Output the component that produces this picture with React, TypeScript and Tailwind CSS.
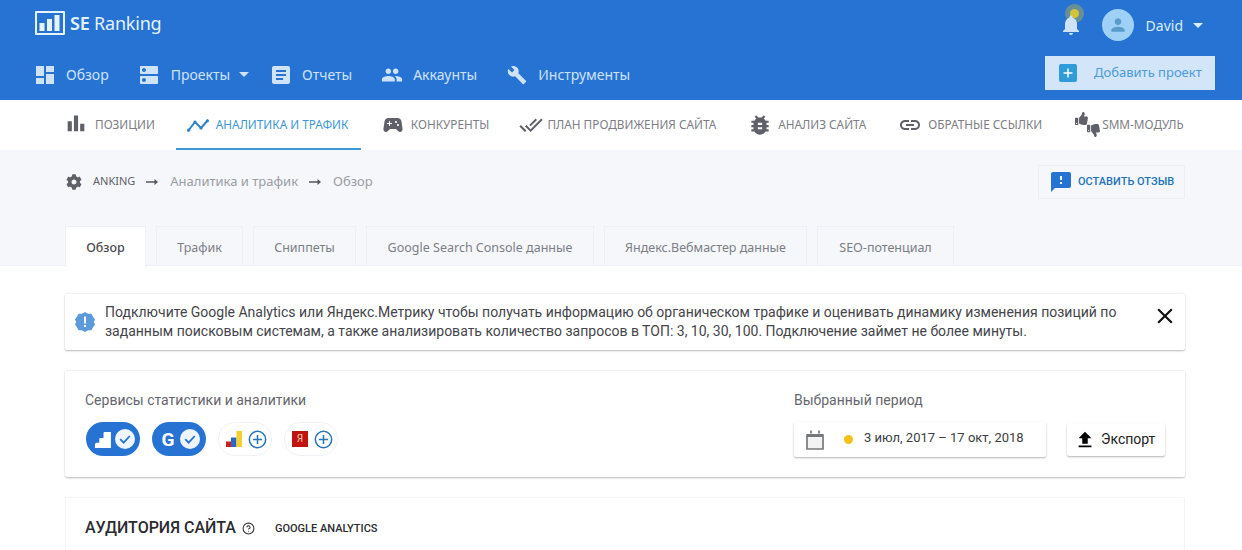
import { CircleHelp } from 'lucide-react';
import { FaCog, FaThumbsDown, FaThumbsUp } from 'react-icons/fa';

const P = {
  dashboard: 'M3 13h8V3H3v10zm0 8h8v-6H3v6zm10 0h8V11h-8v10zm0-18v6h8V3h-8z',
  dns: 'M20 13H4c-.55 0-1 .45-1 1v6c0 .55.45 1 1 1h16c.55 0 1-.45 1-1v-6c0-.55-.45-1-1-1zM7 19c-1.1 0-2-.9-2-2s.9-2 2-2 2 .9 2 2-.9 2-2 2zM20 3H4c-.55 0-1 .45-1 1v6c0 .55.45 1 1 1h16c.55 0 1-.45 1-1V4c0-.55-.45-1-1-1zM7 9c-1.1 0-2-.9-2-2s.9-2 2-2 2 .9 2 2-.9 2-2 2z',
  article: 'M19 3H5c-1.1 0-2 .9-2 2v14c0 1.1.9 2 2 2h14c1.1 0 2-.9 2-2V5c0-1.1-.9-2-2-2zm-5 14H7v-2h7v2zm3-4H7v-2h10v2zm0-4H7V7h10v2z',
  people: 'M16 11c1.66 0 2.99-1.34 2.99-3S17.66 5 16 5c-1.66 0-3 1.34-3 3s1.34 3 3 3zm-8 0c1.66 0 2.99-1.34 2.99-3S9.66 5 8 5C6.34 5 5 6.34 5 8s1.34 3 3 3zm0 2c-2.33 0-7 1.17-7 3.5V19h14v-2.5c0-2.33-4.67-3.5-7-3.5zm8 0c-.29 0-.62.02-.97.05 1.16.84 1.97 1.97 1.97 3.45V19h6v-2.5c0-2.33-4.67-3.5-7-3.5z',
  build: 'M22.7 19l-9.1-9.1c.9-2.3.4-5-1.5-6.9-2-2-5-2.4-7.4-1.3L9 6 6 9 1.6 4.7C.4 7.1.9 10.1 2.9 12.1c1.9 1.9 4.6 2.4 6.9 1.5l9.1 9.1c.4.4 1 .4 1.4 0l2.3-2.3c.5-.4.5-1.1.1-1.4z',
  bars: 'M2 10h5v12H2zM9.500 3h5v19h-5zM17 13h5v9h-5z',
  gamepad: 'M21.58 16.09l-1.09-7.66C20.21 6.46 18.52 5 16.53 5H7.470C5.480 5 3.790 6.460 3.510 8.430l-1.090 7.660C2.200 17.630 3.390 19 4.940 19c.68 0 1.320-.27 1.800-.75L9 16h6l2.250 2.250c.48.48 1.130.75 1.800.75 1.560 0 2.750-1.370 2.530-2.910zM11 11H9v2H8v-2H6v-1h2V8h1v2h2v1zm4-1c-.55 0-1-.45-1-1s.45-1 1-1 1 .45 1 1-.45 1-1 1zm2 3c-.55 0-1-.45-1-1s.45-1 1-1 1 .45 1 1-.45 1-1 1z',
  doneAll: 'M18 7l-1.41-1.41-6.34 6.34 1.41 1.41L18 7zm4.24-1.41L11.66 16.17 7.48 12l-1.41 1.41L11.66 19l12-12-1.42-1.41zM.41 13.41L6 19l1.41-1.41L1.83 12 .41 13.41z',
  bug: 'M20 8h-2.81c-.45-.78-1.07-1.45-1.82-1.96L17 4.41 15.59 3l-2.17 2.17C12.96 5.06 12.49 5 12 5c-.49 0-.96.06-1.41.17L8.41 3 7 4.41l1.62 1.63C7.88 6.55 7.26 7.22 6.81 8H4v2h2.09c-.05.33-.09.66-.09 1v1H4v2h2v1c0 .34.04.67.09 1H4v2h2.81c1.04 1.79 2.97 3 5.19 3s4.15-1.21 5.19-3H20v-2h-2.09c.05-.33.09-.66.09-1v-1h2v-2h-2v-1c0-.34-.04-.67-.09-1H20V8zm-6 8h-4v-2h4v2zm0-4h-4v-2h4v2z',
  link: 'M3.9 12c0-1.71 1.39-3.1 3.1-3.1h4V7H7c-2.76 0-5 2.24-5 5s2.24 5 5 5h4v-1.9H7c-1.71 0-3.1-1.39-3.1-3.1zM8 13h8v-2H8v2zm9-6h-4v1.9h4c1.71 0 3.1 1.39 3.1 3.1s-1.39 3.1-3.1 3.1h-4V17h4c2.76 0 5-2.24 5-5s-2.24-5-5-5z',
  feedback: 'M20 2H4c-1.1 0-1.99.9-1.99 2L2 22l4-4h14c1.1 0 2-.9 2-2V4c0-1.1-.9-2-2-2zm-7 12h-2v-2h2v2zm0-4h-2V6h2v4z',
  bell: 'M12 22c1.1 0 2-.9 2-2h-4c0 1.1.89 2 2 2zm6-6v-5c0-3.07-1.64-5.64-4.5-6.32V4c0-.83-.67-1.5-1.5-1.5s-1.5.67-1.5 1.5v.68C7.63 5.36 6 7.92 6 11v5l-2 2v1h16v-1l-2-2z',
  person: 'M12 12c2.21 0 4-1.79 4-4s-1.79-4-4-4-4 1.79-4 4 1.79 4 4 4zm0 2c-2.67 0-8 1.34-8 4v2h16v-2c0-2.66-5.33-4-8-4z',
  upload: 'M9 16h6v-6h4l-7-7-7 7h4zm-4 2h14v2H5z',
  close: 'M19 6.41L17.59 5 12 10.59 6.41 5 5 6.41 10.59 12 5 17.59 6.41 19 12 13.41 17.59 19 19 17.59 13.41 12z',
};

function Icon({ d, className }: { d: string; className?: string }) {
  return (
    <svg viewBox="0 0 24 24" fill="currentColor" className={className}>
      <path d={d} />
    </svg>
  );
}

function Caret({ className }: { className?: string }) {
  return <span className={`block h-0 w-0 border-x-[5px] border-t-[5px] border-x-transparent ${className}`} />;
}

function Arrow({ className }: { className?: string }) {
  return (
    <svg viewBox="0 0 12 8" className={`h-2 w-3 text-[#55565d] ${className}`} fill="currentColor">
      <path d="M0 3.300h8.500V1L12 4 8.500 7V4.700H0z" />
    </svg>
  );
}

function PlusRound() {
  return (
    <svg viewBox="0 0 20 20" className="h-[19px] w-[19px] text-[#2a74b8]" fill="none" stroke="currentColor" strokeWidth="1.6">
      <circle cx="10" cy="10" r="8.6" />
      <path d="M10 5.2v9.6M5.2 10h9.6" />
    </svg>
  );
}

function CheckRound() {
  return (
    <svg viewBox="0 0 20 20" className="h-5 w-5">
      <circle cx="10" cy="10" r="10" fill="#eef5fc" />
      <path d="M5.2 10.2l3.4 3.400 6.2-6.600" fill="none" stroke="#2673d4" strokeWidth="1.8" />
    </svg>
  );
}

const tabs = [
  { label: 'Трафик', w: 'w-[87px]' },
  { label: 'Сниппеты', w: 'w-[103px]' },
  { label: 'Google Search Console данные', w: 'w-[228px]' },
  { label: 'Яндекс.Вебмастер данные', w: 'w-[203px]' },
  { label: 'SEO-потенциал', w: 'w-[137px]' },
];

export default function App() {
  return (
    <div className="h-[550px] overflow-hidden bg-white font-['Roboto',sans-serif]">
      {/* blue header */}
      <header className="relative h-[100px] bg-[#2673d4] font-['Noto_Sans',sans-serif]">
        <div className="flex h-[50px] items-center pl-[35px]">
          <svg viewBox="0 0 30 24" className="mb-[5px] h-6 w-[30px] text-[#e6f4f9]" fill="currentColor">
            <path fillRule="evenodd" d="M1 0h28a1 1 0 0 1 1 1v22a1 1 0 0 1-1 1H1a1 1 0 0 1-1-1V1a1 1 0 0 1 1-1zm1 2v20h26V2z" />
            <path d="M4.500 12h5v8h-5zM12 8h5v12h-5zM19.500 4h5v16h-5z" />
          </svg>
          <span className="mb-[5px] ml-[5px] text-[18px] leading-none tracking-[-0.2px] text-[#e4f1f8]">
            <b className="font-semibold">SE</b> Ranking
          </span>
          <div className="ml-auto flex items-center pr-[39px]">
            <div className="relative mr-[20px] h-6 w-5">
              <span className="absolute left-[3px] top-[-9px] h-[19px] w-[19px] rounded-full bg-[#c9b93f]/40" />
              <span className="absolute left-[8px] top-[-4px] h-[9px] w-[9px] rounded-full bg-[#d4c23a]" />
              <Icon d={P.bell} className="absolute left-[-3px] top-0 h-6 w-6 text-[#cfe3f8]" />
            </div>
            <span className="flex h-8 w-8 items-center justify-center rounded-full bg-[#9fd0f6]">
              <Icon d={P.person} className="h-5 w-5 text-[#5a9cc9]" />
            </span>
            <span className="ml-3 text-[14px] text-[#dcedfb]">David</span>
            <Caret className="ml-[10px] border-t-[#dcedfb]" />
          </div>
        </div>
        <nav className="flex h-[50px] items-center pb-px pl-[33px] text-[14px] text-[#cfe3f8]">
          <Icon d={P.dashboard} className="h-6 w-6" />
          <span className="ml-[9px]">Обзор</span>
          <Icon d={P.dns} className="ml-[28px] h-6 w-6" />
          <span className="ml-[10px]">Проекты</span>
          <Caret className="ml-[9px] border-t-[#cfe3f8]" />
          <Icon d={P.article} className="ml-5 h-6 w-6" />
          <span className="ml-[9px]">Отчеты</span>
          <Icon d={P.people} className="ml-[29px] h-[22px] w-[22px]" />
          <span className="ml-[10px]">Аккаунты</span>
          <Icon d={P.build} className="ml-[30px] h-5 w-5" />
          <span className="ml-[11px]">Инструменты</span>
        </nav>
        <button className="absolute left-[1045px] top-[56px] flex h-[34px] w-[170px] items-center bg-[#d2e5f9] pl-[14px] text-[13px] text-[#4d9ad4]">
          <span className="flex h-[18px] w-[18px] items-center justify-center rounded-[2px] bg-[#2f9bd8]">
            <svg viewBox="0 0 12 12" className="h-3 w-3" stroke="white" strokeWidth="1.5"><path d="M6 1.500v9M1.500 6h9" /></svg>
          </span>
          <span className="ml-[17px]">Добавить проект</span>
        </button>
      </header>

      {/* section nav */}
      <nav className="flex h-[50px] items-center pl-[65px] font-['Noto_Sans',sans-serif] text-[11.8px] uppercase text-[#7d7e85]">
        <Icon d={P.bars} className="mb-1 ml-px h-5 w-5 text-[#5f6068]" />
        <span className="ml-[9px]">Позиции</span>
        <div className="ml-[21px] flex h-[50px] w-[185px] items-center border-b-2 border-[#3d97d3] pl-[11px] pt-[2px] text-[#3d97d3]">
          <svg viewBox="0 0 22 13" className="h-[13px] w-[22px] text-[#2f83c4]" fill="currentColor">
            <path d="M1 12l7-9 6 6 7-8" fill="none" stroke="currentColor" strokeWidth="2" />
            <circle cx="1.600" cy="11.200" r="1.600" />
            <circle cx="8" cy="3" r="1.600" />
            <circle cx="14" cy="9" r="1.600" />
            <circle cx="20.400" cy="1.800" r="1.600" />
          </svg>
          <span className="ml-[7px] whitespace-nowrap">Аналитика и трафик</span>
        </div>
        <Icon d={P.gamepad} className="ml-5 h-6 w-6 text-[#5f6068]" />
        <span className="ml-[6px]">Конкуренты</span>
        <Icon d={P.doneAll} className="ml-[30px] h-6 w-6 text-[#5f6068]" />
        <span className="ml-1 whitespace-nowrap">План продвижения сайта</span>
        <Icon d={P.bug} className="ml-[31px] h-[26px] w-[26px] text-[#5f6068]" />
        <span className="ml-[5px] whitespace-nowrap">Анализ сайта</span>
        <Icon d={P.link} className="ml-[32px] h-6 w-6 text-[#5f6068]" />
        <span className="ml-[6px] whitespace-nowrap">Обратные ссылки</span>
        <div className="relative ml-[31px] h-[26px] w-[26px] text-[#5f6068]">
          <FaThumbsUp className="absolute left-[2px] top-0 h-[13px] w-[13px]" />
          <FaThumbsDown className="absolute left-[14px] top-[12px] h-[13px] w-[13px]" />
        </div>
        <span className="ml-[3px] whitespace-nowrap">SMM-модуль</span>
      </nav>

      {/* breadcrumb + tabs */}
      <section className="h-[116px] border-b border-[#edf0f4] bg-[#f5f7fb]">
        <div className="flex h-[76px] items-start justify-between pl-[66px] pr-[57px] pt-[15px]">
          <div className="flex h-[33px] items-center font-['Noto_Sans',sans-serif] text-[13px] text-[#9a9ca3]">
            <FaCog className="h-4 w-4 text-[#5f6068]" />
            <span className="ml-[11px] text-[11px] text-[#5f6068]">ANKING</span>
            <Arrow className="ml-[11px]" />
            <span className="ml-3">Аналитика и трафик</span>
            <Arrow className="ml-[11px]" />
            <span className="ml-3">Обзор</span>
          </div>
          <button className="flex h-[34px] w-[147px] items-center border border-[#ebeef3] pl-[10px] text-[11px] font-medium uppercase text-[#2273bb]">
            <Icon d={P.feedback} className="h-6 w-6 text-[#2673d4]" />
            <span className="ml-[5px] whitespace-nowrap">Оставить отзыв</span>
          </button>
        </div>
        <div className="flex gap-[10px] pl-[65px] font-['Noto_Sans',sans-serif] text-[12.5px] text-[#7c7e85]">
          <div className="flex h-[41px] w-[81px] items-center justify-center rounded-t-[2px] border border-b-0 border-[#eef0f4] bg-white pt-[2px] font-medium text-[#4a4b50]">
            Обзор
          </div>
          {tabs.map((t) => (
            <div key={t.label} className={`flex h-10 ${t.w} items-center justify-center whitespace-nowrap border border-b-0 border-[#eef0f5] pt-[3px]`}>
              {t.label}
            </div>
          ))}
        </div>
      </section>

      {/* page content */}
      <main className="flex flex-col gap-5 pl-[65px] pr-[57px] pt-[27px]">
        <div className="flex h-[57px] items-center rounded-[2px] border-t border-[#f1f2f4] px-[10px] shadow-[0_1px_2px_rgba(0,0,0,0.28)]">
          <svg viewBox="0 0 20 20" className="h-5 w-5 shrink-0">
            <path d="M10 0l3 1.700 3.400.1 1.700 3 2 2.900-1.400 2.300 1.400 2.300-2 2.900-1.700 3-3.400.1L10 20l-3-1.700-3.400-.1-1.700-3-2-2.900L1.300 10-.1 7.700l2-2.900 1.700-3L7 1.700z" fill="#5b9bdc" />
            <path d="M9 4.500h2v7H9zM9 13h2v2H9z" fill="white" />
          </svg>
          <p className="ml-[10px] w-[1020px] text-[14px] leading-[19px] text-[#44454a]">
            Подключите Google Analytics или Яндекс.Метрику чтобы получать информацию об органическом трафике и оценивать динамику изменения позиций по заданным поисковым системам, а также анализировать количество запросов в ТОП: 3, 10, 30, 100. Подключение займет не более минуты.
          </p>
          <Icon d={P.close} className="mb-3 ml-auto mr-[-3px] h-[26px] w-[26px] text-[#111]" />
        </div>

        <div className="flex h-[107px] justify-between rounded-[2px] border-t border-[#f1f2f4] px-5 pt-[21px] shadow-[0_1px_2px_rgba(0,0,0,0.28)]">
          <div>
            <div className="text-[14px] leading-[17px] text-[#66676c]">Сервисы статистики и аналитики</div>
            <div className="ml-px mt-[13px] flex gap-3">
              <span className="flex h-[34px] w-[54px] items-center rounded-full bg-[#2673d4] pl-[9px]">
                <svg viewBox="0 0 16 16" className="h-[17px] w-[17px]" fill="white"><path d="M0 16v-3.500q0-1.500 1.500-1.500H4V7.500q0-1 1-1h3V2q0-1 1-1h6v15z" /></svg>
                <span className="ml-[3px]"><CheckRound /></span>
              </span>
              <span className="flex h-[34px] w-[54px] items-center rounded-full bg-[#2673d4] pl-[7px]">
                <span className="w-[18px] text-center text-[19px] font-bold leading-none text-white">G</span>
                <span className="ml-[3px]"><CheckRound /></span>
              </span>
              <span className="flex h-[34px] w-[54px] items-center rounded-full border border-[#f0f2f6] pl-[7px]">
                <svg viewBox="0 0 16 16" className="h-4 w-4">
                  <path d="M0 10.500h5V16H0z" fill="#cc1f1a" />
                  <path d="M5 6.500h5.500V16H5z" fill="#2a67c9" />
                  <path d="M10.500 0H16v16h-5.500z" fill="#f5cf2e" />
                </svg>
                <span className="ml-[6px] flex"><PlusRound /></span>
              </span>
              <span className="flex h-[34px] w-[54px] items-center rounded-full border border-[#f0f2f6] pl-[7px]">
                <span className="flex h-4 w-4 items-center justify-center bg-[#c0140c] text-[10px] leading-none text-[#f0c8b0]">Я</span>
                <span className="ml-[6px] flex"><PlusRound /></span>
              </span>
            </div>
          </div>
          <div className="flex flex-col items-start">
            <div className="text-[14px] leading-[17px] text-[#66676c]">Выбранный период</div>
            <div className="mt-[13px] flex items-center">
              <div className="flex h-[35px] w-[252px] items-center rounded-[2px] pl-3 shadow-[0_1px_2px_rgba(0,0,0,0.3)]">
                <svg viewBox="0 0 18 20" className="h-5 w-[18px] text-[#77787d]" fill="none" stroke="currentColor" strokeWidth="1.7">
                  <path d="M1 5h16v14H1z" fill="#f3f3f3" />
                  <path d="M1 5.500h16" strokeWidth="3" />
                  <path d="M5 .5v3M13 .5v3" />
                </svg>
                <span className="ml-5 h-[9px] w-[9px] rounded-full bg-[#f2c21b]" />
                <span className="mb-[3px] ml-[11px] text-[13px] text-[#3c3d42]">3 июл, 2017 – 17 окт, 2018</span>
              </div>
              <button className="ml-[21px] flex h-[33px] w-[98px] items-center rounded-[2px] pl-[7px] text-[14px] text-[#222] shadow-[0_1px_2px_rgba(0,0,0,0.3)]">
                <Icon d={P.upload} className="h-[22px] w-[22px] text-black" />
                <span className="ml-[5px]">Экспорт</span>
              </button>
            </div>
          </div>
        </div>

        <div className="flex h-[80px] items-start rounded-[2px] border-x border-t border-[#f3f4f6] pl-[19px] pt-5">
          <span className="text-[16px] font-medium leading-5 text-[#2b2c30]">АУДИТОРИЯ САЙТА</span>
          <CircleHelp className="ml-[6px] mt-1 h-[13px] w-[13px] text-[#333]" strokeWidth={2} />
          <span className="ml-5 mt-[3px] text-[11px] font-medium text-[#2b2c30]">GOOGLE ANALYTICS</span>
        </div>
      </main>
    </div>
  );
}
